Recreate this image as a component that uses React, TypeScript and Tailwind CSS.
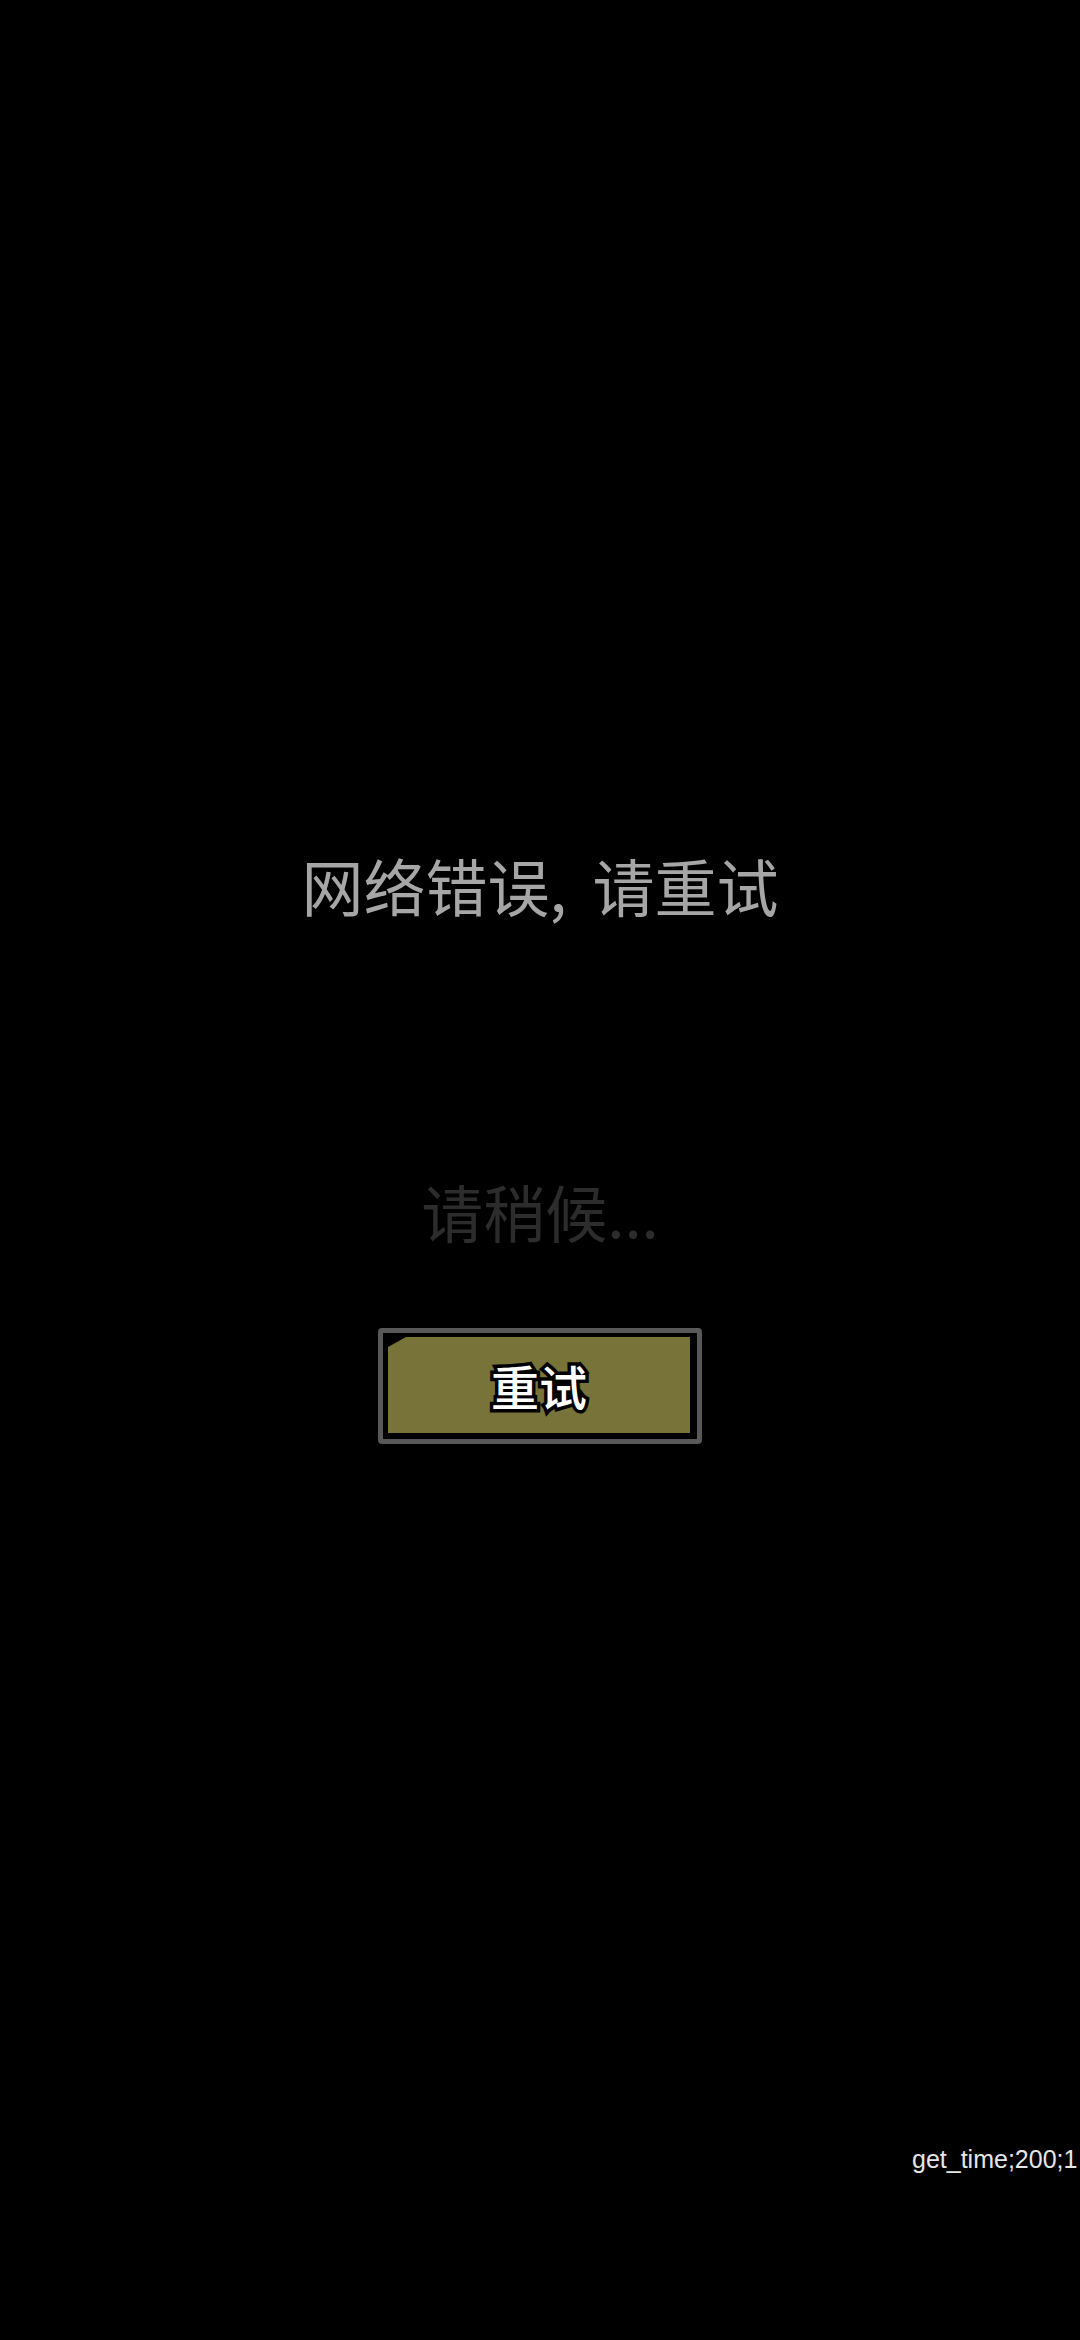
import React from 'react';

const cjk = "font-['Noto_Sans_CJK_SC','Noto_Sans',sans-serif]";

// Bouton "重试" avec cadre gris et coin coupé
const RetryButton: React.FC = () => (
  <button className="mt-[86px] w-[324px] h-[116px] border-[5px] border-[#585858] rounded-[4px] bg-black pl-[5px] pr-[7px] pt-[4px] pb-[6px] flex">
    <div className="flex-1 bg-[#787338] flex items-center justify-center [clip-path:polygon(0_10px,18px_0,100%_0,100%_100%,0_100%)]">
      <span
        className={`${cjk} text-[48px] leading-none font-medium text-white [paint-order:stroke_fill] [-webkit-text-stroke:7px_#000]`}
      >
        重试
      </span>
    </div>
  </button>
);

export default function App() {
  return (
    <div className="w-[1080px] h-[2340px] bg-black flex flex-col items-center overflow-hidden">
      {/* Message d'erreur */}
      <p className={`${cjk} mt-[854px] text-[62px] leading-[62px] text-[#a6a6a6] whitespace-nowrap`}>
        网络错误<span className="mr-[12px]">,</span> 请重试
      </p>
      {/* Attente */}
      <p className={`${cjk} mt-[264px] text-[62px] leading-[62px] text-[#2c2c2c] whitespace-nowrap`}>
        请稍候...
      </p>
      <RetryButton />
      {/* Debug */}
      <p className="self-start ml-[912px] mt-[700px] font-['Liberation_Sans',Arial,sans-serif] text-[25px] leading-[30px] text-[#e6e6e6] whitespace-nowrap">
        get_time;200;1
      </p>
    </div>
  );
}
